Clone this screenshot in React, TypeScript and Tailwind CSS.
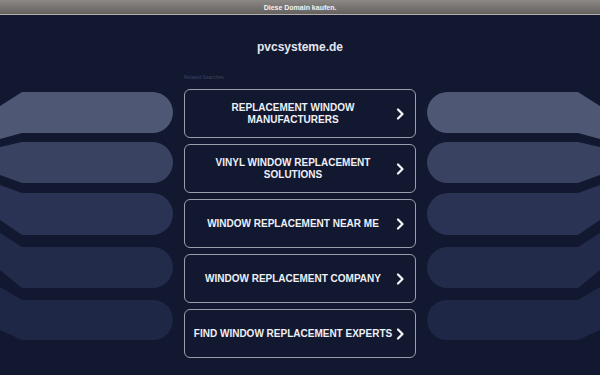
const SEARCHES = [
  "REPLACEMENT WINDOW MANUFACTURERS",
  "VINYL WINDOW REPLACEMENT SOLUTIONS",
  "WINDOW REPLACEMENT NEAR ME",
  "WINDOW REPLACEMENT COMPANY",
  "FIND WINDOW REPLACEMENT EXPERTS",
];

// pill: top/bottom at the slant join (x=22) and at the outer edge (x=0)
const PILLS = [
  { T: 3, B: 44, t0: 17, b0: 50, fill: "#4e5773" },
  { T: 53, B: 94, t0: 58, b0: 86, fill: "#3a4262" },
  { T: 104, B: 146, t0: 96, b0: 131, fill: "#2b3354" },
  { T: 158, B: 199, t0: 144, b0: 181, fill: "#232b4b" },
  { T: 211, B: 251, t0: 198, b0: 241, fill: "#1f2747" },
];

function pillPath(p: (typeof PILLS)[number]) {
  const r = (p.B - p.T) / 2;
  return `M0 ${p.t0} L22 ${p.T} L${173 - r} ${p.T} A${r} ${r} 0 0 1 ${173 - r} ${p.B} L22 ${p.B} L0 ${p.b0} Z`;
}

function Stack({ flip }: { flip?: boolean }) {
  return (
    <svg
      width="173"
      height="260"
      viewBox="0 0 173 260"
      className={flip ? "block -scale-x-100" : "block"}
    >
      {PILLS.map((p) => (
        <path key={p.T} d={pillPath(p)} fill={p.fill} />
      ))}
    </svg>
  );
}

function Chevron() {
  return (
    <svg width="10" height="12" viewBox="0 0 10 12" className="shrink-0">
      <path
        d="M3 1.5 L7.5 6 L3 10.5"
        fill="none"
        stroke="#f3f4f8"
        strokeWidth="2.2"
        strokeLinecap="round"
        strokeLinejoin="round"
      />
    </svg>
  );
}

export default function App() {
  return (
    <div
      className="w-[600px] h-[375px] overflow-hidden bg-[#121830] flex flex-col"
      style={{ fontFamily: '"Liberation Sans", Arial, sans-serif' }}
    >
      <div className="h-[15px] shrink-0 bg-gradient-to-b from-[#8c8885] to-[#65615f] border-b border-[#b2aeab] flex items-center justify-center">
        <span className="text-[7px] font-bold text-[#f4f2f0] leading-none">
          Diese Domain kaufen.
        </span>
      </div>

      <div className="h-[30px] mt-[17px] flex items-center justify-center">
        <h1 className="text-[12px] font-bold text-[#e4e6ee] leading-none">
          pvcsysteme.de
        </h1>
      </div>

      <div className="pl-[184px] mt-[9px] mb-[6px] h-[12px] flex items-center">
        <span className="text-[5px] text-[#3c4462] leading-none">
          Related Searches
        </span>
      </div>

      <div className="grid grid-cols-[173px_232px_173px] gap-x-[11px]">
        <div>
          <Stack />
        </div>
        <div className="flex flex-col gap-[6px]">
          {SEARCHES.map((s) => (
            <a
              key={s}
              href="#"
              className="h-[49px] rounded-[6px] border-[1.5px] border-[#9a9daa] flex items-center pl-[6px] pr-[10px]"
            >
              <span className="flex-1 text-center text-[10px] font-bold text-[#eef0f6] leading-[12px]">
                {s}
              </span>
              <Chevron />
            </a>
          ))}
        </div>
        <div>
          <Stack flip />
        </div>
      </div>
    </div>
  );
}
